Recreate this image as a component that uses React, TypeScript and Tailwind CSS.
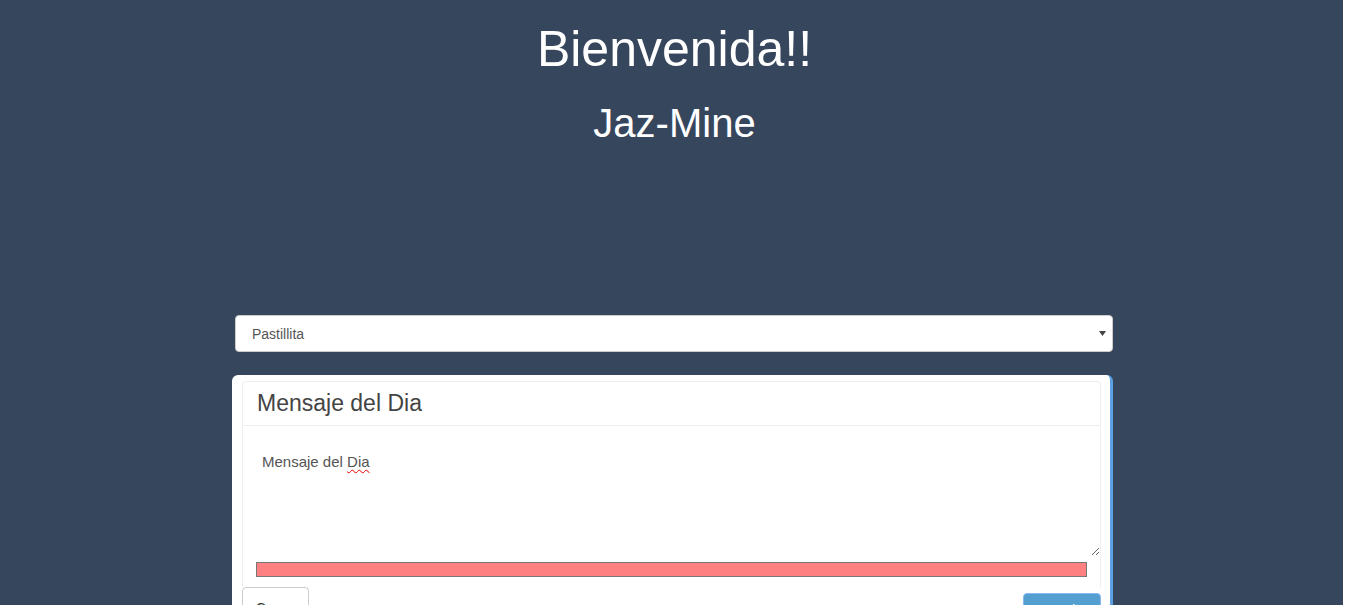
export default function App() {
  return (
    <div className="h-[605px] w-full overflow-hidden bg-white font-['Liberation_Sans',Arial,sans-serif]">
      <div className="h-full w-[1343px] bg-[#36465d]">

        {/* Greeting */}
        <h1 className="pl-[6px] pt-[22px] text-center text-[50px] leading-[55px] text-white">Bienvenida!!</h1>
        <h2 className="mt-[24px] pl-[6px] text-center text-[40px] leading-[44px] text-white">Jaz-Mine</h2>

        {/* Select */}
        <div className="ml-[235px] mt-[170px] flex h-[37px] w-[878px] items-center justify-between rounded-[4px] border border-[#ccc] bg-white pl-[16px] pr-[6px]">
          <span className="pt-[2px] text-[14px] text-[#555]">Pastillita</span>
          <svg width="7" height="5" viewBox="0 0 7 5"><path d="M0 0h7L3.5 5z" fill="#444" /></svg>
        </div>

        {/* Card */}
        <div className="ml-[232px] mt-[23px] h-[300px] w-[881px] rounded-[6px] border-r-[3px] border-[#5aa0e2] bg-white pl-[10px] pt-[6px]">
          <div className="w-[859px] rounded-t-[4px] border-x border-t border-[#eee]">
            <div className="flex h-[44px] items-center border-b border-[#eee] pl-[14px] text-[23px] text-[#444]">
              Mensaje del Dia
            </div>
            <div className="pb-[10px] pt-[19px]">
              <div className="ml-[13px] h-[111px] w-[844px] resize-y overflow-auto px-[6px] py-[6px] text-[15px] text-[#555]">
                Mensaje del <span className="underline decoration-[#e00] decoration-wavy decoration-1 underline-offset-2">Dia</span>
              </div>
              <div className="ml-[13px] mt-[6px] h-[15px] w-[831px] border border-[#777] bg-[#ff8080]" />
            </div>
          </div>
          <div className="flex items-start justify-between">
            <button className="h-[34px] w-[67px] rounded-[4px] border border-[#ccc] bg-white pt-[8px] text-[14px] leading-none text-[#333]">Cerrar</button>
            <button className="mr-[9px] mt-[6px] h-[34px] w-[78px] rounded-[4px] border border-[#8ab8f5] bg-[#529fd0] text-[14px] text-white">Guardar</button>
          </div>
        </div>

      </div>
    </div>
  )
}
